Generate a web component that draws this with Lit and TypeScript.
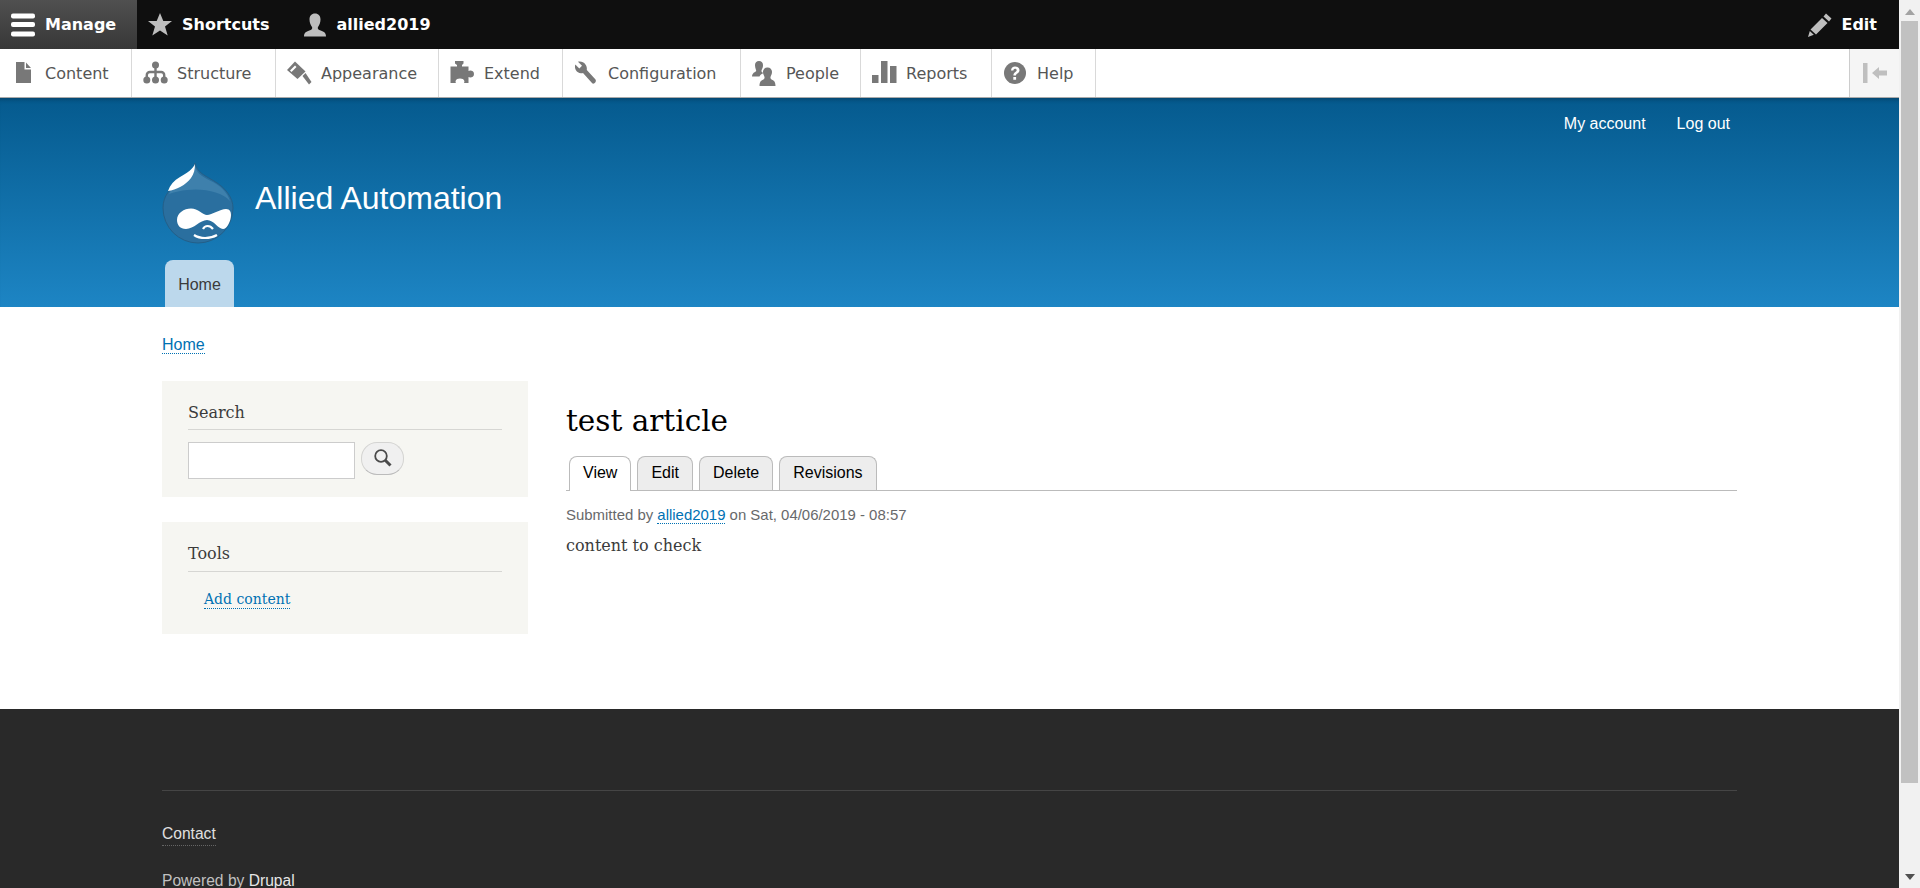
import { html, css, LitElement, svg } from 'lit';
import { customElement } from 'lit/decorators.js';

const trayIcons: Record<string, unknown> = {
	content: svg`<path d="M5 1h8.500v7.500H20V22H5z"/><path d="M15 1.500l5 5.500h-5z"/>`,
	structure: svg`<circle cx="12.500" cy="4" r="3.500"/><circle cx="3.800" cy="19" r="3.500"/><circle cx="12.500" cy="19" r="3.500"/><circle cx="21.200" cy="19" r="3.500"/><path d="M12.500 6v11M3.800 17v-3a3 3 0 0 1 3-3h11.400a3 3 0 0 1 3 3v3" fill="none" stroke="#787878" stroke-width="2.400"/>`,
	appearance: svg`<path d="M0 9l8-8.500 10.500 10L10.500 18z"/><path d="M3 9.500l5-5 1.500 1.500-5 5z" fill="#fff"/><path d="M15.500 15l3-3 6 9-2.500 2.500z"/>`,
	extend: svg`<path d="M5 0h8.500v2.500L12 4v1.500h6.500V10c1-.8 5.500-1 5.500 3s-4.500 3.800-5.500 3v6H14c.8-1 1-4.500-4-4.500S5.200 21 6 22H.5V5.500H7V4L5 2.500z"/>`,
	config: svg`<path d="M4 .8l4 4-2.700 2.700-4-4C0 7.500 2.500 12 7 12.300c.7.100 1.400 0 2-.2l9 10c1.800 1.800 5-1.400 3.500-3.500L12.800 9c.9-4.500-3.300-9.500-8.800-8.200z"/>`,
	people: svg`<path d="M7 0a4 4 0 0 1 4 4.500c0 2-1 3.500-1.500 5-.3 1 .5 2 2 2.500-1.800 1-3.500 2-4 3.500H0c0-2 1-3.500 3-4.500 1-.5 1.500-1 1-2C3.500 7.500 3 6 3 4.500A4 4 0 0 1 7 0z"/><path d="M15.500 6.500A4.300 4.300 0 0 1 20 11c0 2-1 3.500-1.500 5-.3 1.500.5 2.500 2 3 1.500.6 3 2 3 6H7.500c0-4 1.500-5.400 3-6 1.500-.5 2.300-1.500 2-3-.5-1.500-1.500-3-1.500-5a4.300 4.300 0 0 1 4.500-4.500z"/>`,
	reports: svg`<rect y="14" width="6.500" height="8"/><rect x="9" width="6.500" height="22"/><rect x="18" y="5" width="6.500" height="17"/>`,
	help: svg`<circle cx="12" cy="12" r="11"/><path d="M8 9.500C8 7 10 5.500 12 5.500c2.500 0 4.500 1.500 4.500 3.800 0 3-3.500 3-3.500 5.200h-2.600c0-3.500 3.300-3.500 3.300-5.200 0-1-.8-1.500-1.700-1.500-1 0-1.500.7-1.600 1.700zM10.300 16h2.800v2.800h-2.800z" fill="#fff"/>`,
};

// icon key, label, width of the tab
const trayItems: [string, string, number][] = [
	['content', 'Content', 132],
	['structure', 'Structure', 144],
	['appearance', 'Appearance', 163],
	['extend', 'Extend', 124],
	['config', 'Configuration', 178],
	['people', 'People', 120],
	['reports', 'Reports', 131],
	['help', 'Help', 104],
];

@customElement('app-root')
export class AppRoot extends LitElement {
	static styles = css`
        :host {
            display: flex;
            height: 888px;
            overflow: hidden;
            font-family: "Liberation Sans", Arial, sans-serif;
            font-size: 16px;
            color: #3b3b3b;
        }

        .page {
            flex: 1;
            min-width: 0;
            display: flex;
            flex-direction: column;
        }

        .page > * {
            flex: none;
        }

        .scrollbar {
            width: 21px;
            background: #f1f1f1;
            display: flex;
            flex-direction: column;
            align-items: center;
        }

        .arrow-up {
            width: 0;
            height: 0;
            margin: 9px 0 6px;
            border-left: 5px solid transparent;
            border-right: 5px solid transparent;
            border-bottom: 6px solid #a3a3a3;
        }

        .scroll-thumb {
            width: 17px;
            height: 762px;
            background: #c1c1c1;
        }

        .arrow-down {
            width: 0;
            height: 0;
            margin: auto 0 8px;
            border-left: 5px solid transparent;
            border-right: 5px solid transparent;
            border-top: 6px solid #505050;
        }

        /* admin toolbar */
        .bar {
            height: 49px;
            background: #0f0f0f;
            display: flex;
            align-items: center;
            font-family: "DejaVu Sans", Tahoma, sans-serif;
            font-weight: 700;
            font-size: 16px;
            color: #fff;
        }

        .bar-tab {
            height: 49px;
            display: flex;
            align-items: center;
            gap: 10px;
        }

        .bar-tab svg {
            fill: #bebebe;
            width: 24px;
            height: 24px;
        }

        .manage {
            width: 137px;
            padding-left: 11px;
            box-sizing: border-box;
            background: linear-gradient(#505050, #373737);
        }

        .manage svg {
            fill: #fff;
        }

        .shortcuts {
            margin-left: 11px;
        }

        .user {
            margin-left: 33px;
        }

        .edit {
            margin-left: auto;
            margin-right: 22px;
            gap: 9px;
        }

        .tray {
            height: 48px;
            background: #fff;
            border-bottom: 1px solid #aaa;
            display: flex;
            font-family: "DejaVu Sans", Tahoma, sans-serif;
            font-size: 16px;
            color: #565656;
        }

        .tray-item {
            display: flex;
            align-items: center;
            box-sizing: border-box;
            padding-left: 11px;
            border-right: 1px solid #d9d9d9;
        }

        .tray-item svg {
            width: 24px;
            height: 24px;
            margin-right: 10px;
            fill: #787878;
            overflow: visible;
        }

        .toggler {
            margin-left: auto;
            width: 50px;
            box-sizing: border-box;
            background: #f5f5f5;
            border-left: 1px solid #ccc;
            display: flex;
            align-items: center;
            justify-content: center;
        }

        .toggler svg {
            width: 24px;
            height: 20px;
            fill: #bfbfbf;
        }

        /* site header */
        .header {
            height: 209px;
            box-sizing: border-box;
            padding: 0 162px;
            background: linear-gradient(#055a8e, #1d85c4);
            box-shadow: inset 0 5px 5px -4px rgba(0, 0, 0, 0.3);
            display: flex;
            flex-direction: column;
            color: #fff;
        }

        .secondary {
            display: flex;
            justify-content: flex-end;
            gap: 31px;
            padding: 17px 7px 0 0;
            line-height: 18px;
        }

        .branding {
            display: flex;
            align-items: flex-start;
            margin-top: 30px;
        }

        .logo {
            width: 72px;
            height: 80px;
            overflow: visible;
        }

        .site-name {
            margin-left: 21px;
            padding-top: 17px;
            font-size: 32px;
            line-height: 36px;
        }

        .main-tabs {
            margin-top: auto;
            padding-left: 3px;
            display: flex;
        }

        .main-tab {
            width: 69px;
            height: 47px;
            box-sizing: border-box;
            border-radius: 8px 8px 0 0;
            background: #bcd8ec;
            color: #3b3b3b;
            text-align: center;
            line-height: 50px;
        }

        /* content */
        .body {
            height: 402px;
            box-sizing: border-box;
            padding: 29px 162px 0;
            background: #fff;
        }

        .link {
            color: #0071b3;
            text-decoration: none;
            border-bottom: 1px dotted #0071b3;
        }

        .breadcrumb {
            line-height: 18px;
            height: 20px;
        }

        .columns {
            display: flex;
            margin-top: 25px;
        }

        .sidebar {
            width: 366px;
            flex: none;
            display: flex;
            flex-direction: column;
            gap: 25px;
        }

        .block {
            background: #f6f6f2;
            padding: 0 26px;
            box-sizing: border-box;
        }

        .search-block {
            height: 116px;
        }

        .tools-block {
            height: 112px;
        }

        .block h2 {
            margin: 0;
            padding-top: 21px;
            height: 49px;
            box-sizing: border-box;
            border-bottom: 1px solid #d6d6d3;
            font-family: "DejaVu Serif", Georgia, serif;
            font-weight: 400;
            font-size: 16px;
            line-height: 22px;
        }

        .tools-block h2 {
            height: 50px;
        }

        .search-row {
            display: flex;
            align-items: flex-start;
            gap: 6px;
            margin-top: 12px;
        }

        .search-input {
            width: 167px;
            height: 37px;
            box-sizing: border-box;
            border: 1px solid #ccc;
            background: #fff;
        }

        .search-button {
            width: 43px;
            height: 33px;
            box-sizing: border-box;
            border: 1px solid #d4d4d2;
            border-bottom-color: #bbb;
            border-radius: 16px;
            background: #f0f0f0;
            display: flex;
            align-items: center;
            justify-content: center;
            padding: 0 0 2px;
        }

        .tool-link {
            display: block;
            width: fit-content;
            margin: 18px 0 0 16px;
            font-family: "DejaVu Serif", Georgia, serif;
            font-size: 14px;
            line-height: 18px;
        }

        .article {
            margin-left: 38px;
            flex: 1;
        }

        .article h1 {
            margin: 0;
            padding-top: 20px;
            height: 75px;
            box-sizing: border-box;
            font-family: "DejaVu Serif", Georgia, serif;
            font-weight: 400;
            font-size: 29.500px;
            line-height: 40px;
            color: #000;
        }

        .tabs {
            height: 34px;
            display: flex;
            gap: 6px;
            padding-left: 3px;
            border-bottom: 1px solid #bbb;
        }

        .tab {
            height: 34px;
            box-sizing: border-box;
            padding: 0 13px;
            border: 1px solid #bbb;
            border-bottom: 0;
            border-radius: 8px 8px 0 0;
            background: #ededed;
            color: #000;
            line-height: 31px;
        }

        .tab.active {
            height: 35px;
            background: #fff;
        }

        .submitted {
            margin-top: 15px;
            font-size: 14.950px;
            line-height: 17px;
            color: #68696b;
        }

        .text {
            margin-top: 13px;
            font-family: "DejaVu Serif", Georgia, serif;
            font-size: 16px;
            line-height: 20px;
        }

        /* footer */
        .footer {
            background: #292929;
            padding: 81px 162px 0;
            color: #c0c0c0;
            font-size: 15.600px;
            line-height: 18px;
        }

        .footer-line {
            height: 1px;
            background: #454545;
        }

        .contact {
            margin-top: 34px;
        }

        .contact span {
            color: #e0e0e0;
            padding-bottom: 3px;
            border-bottom: 1px dotted #666;
        }

        .powered {
            margin-top: 29px;
        }

        .powered span {
            color: #e6e6e6;
        }
    `;

	render() {
		return html`
            <div class="page">
                <div class="bar">
                    <div class="bar-tab manage">
                        <svg viewBox="0 0 24 24"><rect y=".500" width="24" height="5" rx="2"/><rect y="9" width="24" height="5" rx="2"/><rect y="18.500" width="24" height="5" rx="2"/></svg>
                        Manage
                    </div>
                    <div class="bar-tab shortcuts">
                        <svg viewBox="0 0 24 24"><path d="M12 0l3.300 8h8.700l-7 5.500 2.700 9L12 17.500l-7.700 5 2.700-9L0 8h8.700z"/></svg>
                        Shortcuts
                    </div>
                    <div class="bar-tab user">
                        <svg viewBox="0 0 24 24"><path d="M12 .500c3.500 0 5.500 2.500 5.500 6 0 3-1.200 5.500-2.500 7.500-.7 1.300 0 2.500 2 3.300 3.500 1.200 6 2.200 6 6.200H1c0-4 2.500-5 6-6.200 2-.8 2.700-2 2-3.300-1.300-2-2.500-4.500-2.500-7.500 0-3.500 2-6 5.500-6z"/></svg>
                        allied2019
                    </div>
                    <div class="bar-tab edit">
                        <svg viewBox="0 0 24 24"><path d="M18 .500l5.500 5-2.500 3-5.500-5zM14 5l5.500 5L8 21.500l-5.500-5zM1.800 18l4 3.800L0 24z"/></svg>
                        Edit
                    </div>
                </div>
                <div class="tray">
                    ${trayItems.map(([icon, label, width]) => html`
                        <div class="tray-item" style="width: ${width}px">
                            <svg viewBox="0 0 24 24">${trayIcons[icon]}</svg>
                            ${label}
                        </div>
                    `)}
                    <div class="toggler">
                        <svg viewBox="0 0 24 20"><rect width="4.500" height="20"/><path d="M9 10l7-6v3.500h8v5h-8V16z"/></svg>
                    </div>
                </div>

                <div class="header">
                    <div class="secondary">
                        <span>My account</span>
                        <span>Log out</span>
                    </div>
                    <div class="branding">
                        <svg class="logo" viewBox="0 0 72 80">
                            <path d="M33 0c2 10 11 13 19 18 12 7 19 17 19 27a35 35 0 1 1-70 0c0-12 7-20 17-27C25 13 32 8 33 0z" fill="#2a6f9f" stroke="#245f88"/>
                            <path d="M33 3c1 8 10 12 18 16 9 5 15 12 17 19-8-9-26-13-43-11-6 .6-12 2-18 4 2-5 7-10 13-14C28 13 32 8 33 3z" fill="#3e80ac"/>
                            <path d="M33 1C31 6 25 10 18 14 12 17.500 8 22 6 28c8-1 18-6 23-13 3-4 4-9 4-14z" fill="#fff"/>
                            <path d="M15 57c0-7 7-11.500 14-11.500S41 52 45 52c5 0 13-6 19-6 4 0 5 3 5 6 0 6-4 14-8 14-5 0-9-9-16-9s-13 9-21 9c-6 0-9-4-9-9z" fill="#fff"/>
                            <path d="M41 66c2-4 7-4 10 0M32 72c6 4 16 4 23 0" fill="none" stroke="#fff" stroke-width="2.200"/>
                        </svg>
                        <span class="site-name">Allied Automation</span>
                    </div>
                    <div class="main-tabs"><div class="main-tab">Home</div></div>
                </div>

                <div class="body">
                    <div class="breadcrumb"><a class="link">Home</a></div>
                    <div class="columns">
                        <div class="sidebar">
                            <div class="block search-block">
                                <h2>Search</h2>
                                <div class="search-row">
                                    <div class="search-input"></div>
                                    <div class="search-button">
                                        <svg width="20" height="20" viewBox="0 0 20 20"><circle cx="8" cy="8" r="5.800" fill="none" stroke="#4a4a4a" stroke-width="1.800"/><path d="M12 12l5.500 5.500" stroke="#4a4a4a" stroke-width="3"/></svg>
                                    </div>
                                </div>
                            </div>
                            <div class="block tools-block">
                                <h2>Tools</h2>
                                <a class="link tool-link">Add content</a>
                            </div>
                        </div>
                        <div class="article">
                            <h1>test article</h1>
                            <div class="tabs">
                                <div class="tab active">View</div>
                                <div class="tab">Edit</div>
                                <div class="tab">Delete</div>
                                <div class="tab">Revisions</div>
                            </div>
                            <div class="submitted">Submitted by <a class="link">allied2019</a> on Sat, 04/06/2019 - 08:57</div>
                            <div class="text">content to check</div>
                        </div>
                    </div>
                </div>

                <div class="footer">
                    <div class="footer-line"></div>
                    <div class="contact"><span>Contact</span></div>
                    <div class="powered">Powered by <span>Drupal</span></div>
                </div>
            </div>
            <div class="scrollbar">
                <div class="arrow-up"></div>
                <div class="scroll-thumb"></div>
                <div class="arrow-down"></div>
            </div>
        `;
	}
}

declare global {
	interface HTMLElementTagNameMap {
		"app-root": AppRoot,
	}
}
